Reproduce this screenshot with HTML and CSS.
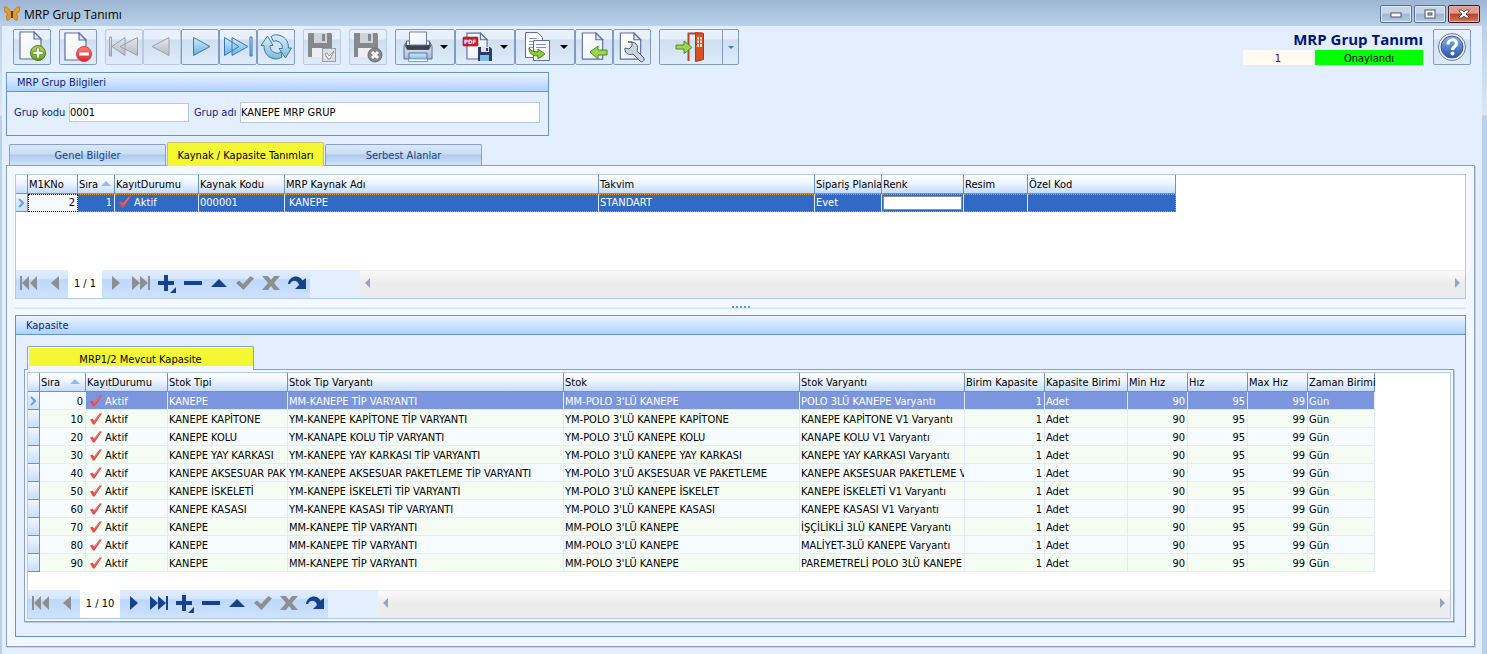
FILE: index.html
```html
<!DOCTYPE html>
<html lang="tr">
<head>
<meta charset="UTF-8">
<meta name="viewport" content="width=device-width, initial-scale=1.0">
<title>MRP Grup Tanımı</title>
<link rel="stylesheet" href="styles.css">
</head>

<body>

<!-- SHARED ICONS -->
<svg class="defs" aria-hidden="true">
    <defs>
        <linearGradient id="blue" x1="0" y1="0" x2="0" y2="1"><stop offset="0" stop-color="#d5ecfb"/><stop offset="1" stop-color="#5fb0e6"/></linearGradient>
        <linearGradient id="aqua" x1="0" y1="0" x2="0" y2="1"><stop offset="0" stop-color="#d8eefa"/><stop offset="1" stop-color="#7fb9dc"/></linearGradient>
        <linearGradient id="gray" x1="0" y1="0" x2="0" y2="1"><stop offset="0" stop-color="#e6e9ed"/><stop offset="1" stop-color="#b4b9c0"/></linearGradient>
        <linearGradient id="green" x1="0" y1="0" x2="0" y2="1"><stop offset="0" stop-color="#b4e05a"/><stop offset="1" stop-color="#5f9f1e"/></linearGradient>
        <linearGradient id="red" x1="0" y1="0" x2="0" y2="1"><stop offset="0" stop-color="#ff8078"/><stop offset="1" stop-color="#dc1f2b"/></linearGradient>
        <linearGradient id="paper" x1="0" y1="0" x2="1" y2="1"><stop offset="0" stop-color="#ffffff"/><stop offset="1" stop-color="#e9eef8"/></linearGradient>
        <linearGradient id="help" x1="0" y1="0" x2="0" y2="1"><stop offset="0" stop-color="#8db4ea"/><stop offset="1" stop-color="#2a52a8"/></linearGradient>
        <linearGradient id="body" x1="0" y1="0" x2="0" y2="1"><stop offset="0" stop-color="#f4f6fa"/><stop offset="1" stop-color="#a9b7d0"/></linearGradient>
    </defs>
    <symbol id="tick" viewBox="0 0 12 12"><path d="M0 6.500l2.500-1 1.500 2L9.500 0.500h2.500L4.500 11.500H3z" fill="#ee4a4a"/><path d="M4 8.500L10 1.500" stroke="#f58a8a" stroke-width=".8"/></symbol>
    <symbol id="first" viewBox="0 0 20 16"><path d="M1 1h2v14H1zM10 1v14L3 8zM18 1v14L11 8z" fill="currentColor"/></symbol>
    <symbol id="prev" viewBox="0 0 20 16"><path d="M14 1v14L6 8z" fill="currentColor"/></symbol>
    <symbol id="next" viewBox="0 0 20 16"><path d="M7 1v14l8-7z" fill="currentColor"/></symbol>
    <symbol id="last" viewBox="0 0 20 16"><path d="M17 1h2v14h-2zM1 1v14l8-7zM9 1v14l8-7z" fill="currentColor"/></symbol>
    <symbol id="add" viewBox="0 0 20 18"><path d="M7 0h4v6h6v4h-6v6H7v-6H1V6h6zM19 12v6h-6z" fill="currentColor"/></symbol>
    <symbol id="remove" viewBox="0 0 20 16"><path d="M1 6h18v4H1z" fill="currentColor"/></symbol>
    <symbol id="edit" viewBox="0 0 20 16"><path d="M2 12l8-8 8 8z" fill="currentColor"/></symbol>
    <symbol id="post" viewBox="0 0 20 16"><path d="M1 8l3-2.500 4 3.500 7.500-8 3.500 2.500L8.500 15z" fill="currentColor"/></symbol>
    <symbol id="cancel" viewBox="0 0 20 16"><path d="M1 1h6l3 4 3-4h6l-6 7 6 7h-6l-3-4-3 4H1l6-7z" fill="currentColor"/></symbol>
    <symbol id="redo" viewBox="0 0 20 16"><path d="M1 9C2 1 12-1 15.500 5.500L19 3v11H8l4-4C11 5 5 4 3 9z" fill="currentColor"/></symbol>
    <symbol id="page" viewBox="0 0 24 30"><path d="M1 1h14l7 7v20H1z" fill="url(#paper)" stroke="#5a70a4" stroke-width="1.200"/><path d="M15 1v7h7z" fill="#dfe7f6" stroke="#5a70a4" stroke-width="1.200"/></symbol>
    <symbol id="floppy" viewBox="0 0 26 26"><path d="M1 1h23l1 1v23H1z" fill="currentColor"/><path d="M7 1h13v10H7z" fill="#d0d3d8"/><path d="M15 2h3v7h-3z" fill="currentColor"/><path d="M5 16h16v9H5z" fill="#eceef1"/></symbol>
</svg>

<div class="window">

    <!-- TITLE BAR -->
    <header class="titlebar">
        <svg class="app-icon" viewBox="0 0 16 16"><path d="M7.500 7C5 2 2 0 0 1c0 3 1 6 4 7-2 1-2 3-1 6 2 1 3-1 4.500-4zM8.500 7C11 2 14 0 16 1c0 3-1 6-4 7 2 1 2 3 1 6-2 1-3-1-4.500-4z" fill="#ee9a22" stroke="#a8660c" stroke-width=".6"/><path d="M8 5v7" stroke="#3b2408" stroke-width="1.500"/></svg>
        <span class="title">MRP Grup Tanımı</span>
        <div class="window-buttons">
            <button type="button" aria-label="Simge durumuna küçült"><svg width="12" height="10" viewBox="0 0 12 10"><rect x="1" y="4" width="10" height="4" fill="#fff" stroke="#4a5566"/></svg></button>
            <button type="button" aria-label="Ekranı kapla"><svg width="12" height="10" viewBox="0 0 12 10"><rect x="1" y="1" width="10" height="8" fill="#fff" stroke="#4a5566"/><rect x="4" y="4" width="4" height="2" fill="#b4c6dc" stroke="#4a5566"/></svg></button>
            <button type="button" class="close" aria-label="Kapat"><svg width="12" height="10" viewBox="0 0 12 10"><path d="M1 1h3l2 2 2-2h3v1L8 5l3 3v1H8L6 7 4 9H1V8l3-3-3-3z" fill="#fff" stroke="#50303a" stroke-width=".8"/></svg></button>
        </div>
    </header>

    <div class="content">

        <!-- TOOLBAR -->
        <div class="toolbar">
            <div class="tool-group">
                <button type="button" class="tool" aria-label="Yeni"><svg viewBox="0 0 32 32"><use href="#page" x="3" y="0" width="24" height="30"/><circle cx="22" cy="22" r="7.500" fill="url(#green)" stroke="#47791a"/><path d="M20.500 17h3v3.500H27v3h-3.500V27h-3v-3.500H17v-3h3.500z" fill="#fff" stroke="#47791a" stroke-width=".6"/></svg></button>
            </div>
            <div class="tool-group">
                <button type="button" class="tool" aria-label="Sil"><svg viewBox="0 0 32 32"><use href="#page" x="2" y="1" width="24" height="30"/><circle cx="22" cy="23" r="7.500" fill="url(#red)" stroke="#e04048"/><path d="M17 21.500h10v3H17z" fill="#fff"/></svg></button>
            </div>
            <div class="tool-group">
                <button type="button" class="tool" disabled aria-label="İlk kayıt"><svg viewBox="0 0 32 32"><path d="M1.500 6h2v19h-2zM17 6.500v18L4 15.500zM29.500 6.500v18L12 15.500z" fill="url(#gray)" stroke="#9aa1ab"/></svg></button>
                <button type="button" class="tool" disabled aria-label="Önceki kayıt"><svg viewBox="0 0 32 32"><path d="M23 6.500v18L6 15.500z" fill="url(#gray)" stroke="#9aa1ab"/></svg></button>
                <button type="button" class="tool" aria-label="Sonraki kayıt"><svg viewBox="0 0 32 32"><path d="M9.500 6.500v18L26 15.500z" fill="url(#blue)" stroke="#3a78b4"/></svg></button>
                <button type="button" class="tool" aria-label="Son kayıt"><svg viewBox="0 0 32 32"><path d="M2.500 6.500v18L17 15.500zM10 6.500v18L26 15.500zM28 6h2v19h-2z" fill="url(#blue)" stroke="#3a78b4"/></svg></button>
                <button type="button" class="tool" aria-label="Yenile"><svg viewBox="0 0 32 32"><path d="M1 14.500L7.500 5l5.500 9.500h-3c0 4 2 6.500 6 7.500 2 .5 3.500 0 5-1l1 5c-3 2-6 2.500-9 1.500C7 26 4 21 4 14.500z" fill="url(#aqua)" stroke="#42789c" stroke-linejoin="round"/><path d="M31.500 17L25.500 27 19 17.500h3.500c0-4-2-6.500-5.500-7.500-1.500-.5-2.500 0-3.500.5L11 5.500c3-2 6-2 9-1 6 2 8.500 6.500 8.500 12.500z" fill="url(#aqua)" stroke="#42789c" stroke-linejoin="round"/></svg></button>
            </div>
            <div class="tool-group">
                <button type="button" class="tool" disabled aria-label="Kaydet"><svg class="faded" viewBox="0 0 32 32"><use href="#floppy" x="1" y="1" width="26" height="26"/><rect x="16.500" y="17.500" width="13" height="13" fill="#dcdfe4" stroke="#989da5"/><path d="M19 23l2-1 2 3 5-5-4 8h-2z" fill="#fff" stroke="#8f949c"/></svg></button>
            </div>
            <div class="tool-group">
                <button type="button" class="tool" disabled aria-label="Kaydet ve kapat"><svg class="faded" viewBox="0 0 32 32"><use href="#floppy" x="1" y="1" width="26" height="26"/><circle cx="23" cy="24" r="7" fill="#85888d" stroke="#6a6d72"/><path d="M20 21l6 6m0-6l-6 6" stroke="#fff" stroke-width="3"/></svg></button>
            </div>
            <div class="tool-group">
                <button type="button" class="tool menu" aria-label="Yazdır"><svg viewBox="0 0 32 32"><path d="M5 10h22l3 5v13H2V15z" fill="url(#body)" stroke="#5a6c94"/><path d="M5 9v7h22V9l2 6-2 4H5l-2-4z" fill="#4a535f"/><path d="M5 14h22v4H5z" fill="#3a424e"/><path d="M7.500 1h17v13h-17z" fill="url(#paper)" stroke="#6a7cac"/><path d="M7 22h18v8H7z" fill="url(#blue)" stroke="#5a70a4"/><path d="M6.500 28h19v2.500h-19z" fill="#fff" stroke="#5a70a4" stroke-width=".6"/></svg><span class="caret"></span></button>
                <button type="button" class="tool menu" aria-label="PDF olarak kaydet"><svg viewBox="0 0 32 32"><use href="#page" x="4" y="1" width="23" height="29"/><rect x="1" y="6" width="15" height="9" rx="1" fill="#c8202c" stroke="#9c1520" stroke-width=".6"/><text class="pdf" x="2" y="13">PDF</text><path d="M16 16h12l2 2v12H16z" fill="#2c3d68"/><path d="M19 16h8v5h-8z" fill="#dfe5f0"/><path d="M24 17h2v3h-2z" fill="#2c3d68"/><path d="M18 24h9v6h-9z" fill="#7cbcec"/></svg><span class="caret"></span></button>
                <button type="button" class="tool menu" aria-label="Kopyala"><svg viewBox="0 0 32 32"><path d="M3.500 1.500h12l5 5v20h-17z" fill="#fff" stroke="#5a70a4"/><path d="M7 7.500h8M7 10.500h8M7 13.500h6M7 16.500h4" stroke="#7b92c8"/><path d="M11.500 9.500h16v20h-16z" fill="url(#paper)" stroke="#5a70a4"/><path d="M14 13.500h10M14 16.500h10" stroke="#7b92c8"/><path d="M7 17c2 3 5 4 9 4v-3l7 5-7 5v-3c-6 0-9-3-9-8z" fill="#8ccc3e" stroke="#4d8420" stroke-linejoin="round"/></svg><span class="caret"></span></button>
                <button type="button" class="tool" aria-label="Aktar"><svg viewBox="0 0 32 32"><use href="#page" x="3" y="1" width="24" height="29"/><path d="M12 21l8-6v4h9v5h-9v4z" fill="#9ad64e" stroke="#4f8a20" stroke-linejoin="round"/></svg></button>
                <button type="button" class="tool" aria-label="Ayarlar"><svg viewBox="0 0 32 32"><use href="#page" x="3" y="1" width="24" height="29"/><path d="M12 11h4v4l-3 3-4-1c-1 4 3 8 8 6l7 7c2 2 5 0 4-3l-7-7c2-5-1-10-9-9z" fill="#cbd3de" stroke="#4f5c70" stroke-linejoin="round"/></svg></button>
            </div>
            <div class="tool-group">
                <button type="button" class="tool exit" aria-label="Çıkış"><svg viewBox="0 0 32 32"><path d="M13.500 30V2.500H28" fill="none" stroke="#b8482a" stroke-width="2"/><path d="M20.500 1.500l8 1v26l-8 2z" fill="#d95024" stroke="#a63a1c"/><path d="M22 6h5v10h-5z" fill="#f5dcc4"/><path d="M22 9h5M22 12.500h5M24.500 6v10" stroke="#b8683c"/><path d="M1 14h8v-4l8 6.500-8 6V18H1z" fill="#9ad64e" stroke="#4f8a20" stroke-linejoin="round"/></svg></button>
                <button type="button" class="tool drop" aria-label="Çıkış seçenekleri"><span class="caret small"></span></button>
            </div>

            <div class="summary">
                <h1>MRP Grup Tanımı</h1>
                <div class="status">
                    <span class="status-no">1</span>
                    <span class="status-text">Onaylandı</span>
                </div>
            </div>
            <button type="button" class="tool" aria-label="Yardım"><svg viewBox="0 0 32 32"><circle cx="16" cy="16" r="13.500" fill="#f0f3fa" stroke="#6a7890"/><circle cx="16" cy="16" r="11" fill="url(#help)" stroke="#34549a"/><path d="M12 13.500c0-6 8.500-6 8.500-1 0 3-4 3-4 6.500" fill="none" stroke="#fff" stroke-width="3"/><circle cx="16.500" cy="22.500" r="2" fill="#fff"/></svg></button>
        </div>

        <!-- GROUP INFO -->
        <section class="box info">
            <h2>MRP Grup Bilgileri</h2>
            <div class="fields">
                <label for="kod">Grup kodu</label>
                <input type="text" id="kod" class="kod" value="0001">
                <label for="ad">Grup adı</label>
                <input type="text" id="ad" class="ad" value="KANEPE MRP GRUP">
            </div>
        </section>

        <!-- MAIN TABS -->
        <div class="tabs" role="tablist">
            <button type="button" class="tab" role="tab">Genel Bilgiler</button>
            <button type="button" class="tab active" role="tab" aria-selected="true">Kaynak / Kapasite Tanımları</button>
            <button type="button" class="tab" role="tab">Serbest Alanlar</button>
        </div>

        <main class="panel">

            <!-- RESOURCES -->
            <div class="grid resources">
                <table>
                    <colgroup><col class="w12"><col class="w50"><col class="w37"><col class="w84"><col class="w86"><col class="w314"><col class="w216"><col class="w67"><col class="w82"><col class="w64"><col class="w148"></colgroup>
                    <thead>
                        <tr><th></th><th>M1KNo</th><th class="sorted">Sıra</th><th>KayıtDurumu</th><th>Kaynak Kodu</th><th>MRP Kaynak Adı</th><th>Takvim</th><th>Sipariş Planla</th><th>Renk</th><th>Resim</th><th>Özel Kod</th></tr>
                    </thead>
                    <tbody>
                        <tr class="focused"><td class="mark"><svg class="arrow" viewBox="0 0 6 10"><path d="M1 1l4 4-4 4"/></svg></td><td class="num cell-focus">2</td><td class="num">1</td><td class="state"><svg><use href="#tick"/></svg>Aktif</td><td>000001</td><td class="name">KANEPE</td><td>STANDART</td><td>Evet</td><td><span class="swatch"></span></td><td></td><td></td></tr>
                    </tbody>
                </table>
                <div class="navigator">
                    <div class="nav-buttons">
                        <button type="button" disabled aria-label="İlk"><svg><use href="#first"/></svg></button>
                        <button type="button" disabled aria-label="Önceki"><svg><use href="#prev"/></svg></button>
                        <span class="counter">1 / 1</span>
                        <button type="button" disabled aria-label="Sonraki"><svg><use href="#next"/></svg></button>
                        <button type="button" disabled aria-label="Son"><svg><use href="#last"/></svg></button>
                        <button type="button" aria-label="Ekle"><svg class="tall"><use href="#add"/></svg></button>
                        <button type="button" aria-label="Çıkar"><svg><use href="#remove"/></svg></button>
                        <button type="button" aria-label="Düzenle"><svg><use href="#edit"/></svg></button>
                        <button type="button" disabled aria-label="Onayla"><svg><use href="#post"/></svg></button>
                        <button type="button" disabled aria-label="Vazgeç"><svg><use href="#cancel"/></svg></button>
                        <button type="button" aria-label="Tazele"><svg><use href="#redo"/></svg></button>
                    </div>
                    <div class="scrollbar">
                        <button type="button" class="to-left" aria-label="Sola kaydır"></button>
                        <button type="button" class="to-right" aria-label="Sağa kaydır"></button>
                    </div>
                </div>
            </div>

            <div class="splitter"><span></span></div>

            <!-- CAPACITY -->
            <section class="box capacity">
                <h2>Kapasite</h2>
                <div class="capacity-body">
                    <div class="tabs inner" role="tablist">
                        <button type="button" class="tab active" role="tab" aria-selected="true">MRP1/2 Mevcut Kapasite</button>
                    </div>
                    <div class="inner-panel">
                        <div class="grid">
                            <table>
                                <colgroup><col class="w12"><col class="w46"><col class="w82"><col class="w120"><col class="w276"><col class="w236"><col class="w165"><col class="w80"><col class="w83"><col class="w60"><col class="w60"><col class="w60"><col class="w67"></colgroup>
                                <thead>
                                    <tr><th></th><th class="sorted">Sıra</th><th>KayıtDurumu</th><th>Stok Tipi</th><th>Stok Tip Varyantı</th><th>Stok</th><th>Stok Varyantı</th><th>Birim Kapasite</th><th>Kapasite Birimi</th><th>Min Hız</th><th>Hız</th><th>Max Hız</th><th>Zaman Birimi</th></tr>
                                </thead>
                                <tbody>
                                    <tr class="selected"><td class="mark"><svg class="arrow" viewBox="0 0 6 10"><path d="M1 1l4 4-4 4"/></svg></td><td class="num">0</td><td class="state"><svg><use href="#tick"/></svg>Aktif</td><td>KANEPE</td><td>MM-KANEPE TİP VARYANTI</td><td>MM-POLO 3'LÜ KANEPE</td><td>POLO 3LÜ KANEPE Varyantı</td><td class="num">1</td><td>Adet</td><td class="num">90</td><td class="num">95</td><td class="num">99</td><td>Gün</td></tr>
                                    <tr><td class="mark"></td><td class="num">10</td><td class="state"><svg><use href="#tick"/></svg>Aktif</td><td>KANEPE KAPİTONE</td><td>YM-KANEPE KAPİTONE TİP VARYANTI</td><td>YM-POLO 3'LÜ KANEPE KAPİTONE</td><td>KANEPE KAPİTONE V1 Varyantı</td><td class="num">1</td><td>Adet</td><td class="num">90</td><td class="num">95</td><td class="num">99</td><td>Gün</td></tr>
                                    <tr><td class="mark"></td><td class="num">20</td><td class="state"><svg><use href="#tick"/></svg>Aktif</td><td>KANEPE KOLU</td><td>YM-KANAPE KOLU TİP VARYANTI</td><td>YM-POLO 3'LÜ KANEPE KOLU</td><td>KANAPE KOLU V1 Varyantı</td><td class="num">1</td><td>Adet</td><td class="num">90</td><td class="num">95</td><td class="num">99</td><td>Gün</td></tr>
                                    <tr><td class="mark"></td><td class="num">30</td><td class="state"><svg><use href="#tick"/></svg>Aktif</td><td>KANEPE YAY KARKASI</td><td>YM-KANEPE YAY KARKASI TİP VARYANTI</td><td>YM-POLO 3'LÜ KANEPE YAY KARKASI</td><td>KANEPE YAY KARKASI Varyantı</td><td class="num">1</td><td>Adet</td><td class="num">90</td><td class="num">95</td><td class="num">99</td><td>Gün</td></tr>
                                    <tr><td class="mark"></td><td class="num">40</td><td class="state"><svg><use href="#tick"/></svg>Aktif</td><td>KANEPE AKSESUAR PAK</td><td>YM-KANEPE AKSESUAR PAKETLEME TİP VARYANTI</td><td>YM-POLO 3'LÜ AKSESUAR VE PAKETLEME</td><td>KANEPE AKSESUAR PAKETLEME V</td><td class="num">1</td><td>Adet</td><td class="num">90</td><td class="num">95</td><td class="num">99</td><td>Gün</td></tr>
                                    <tr><td class="mark"></td><td class="num">50</td><td class="state"><svg><use href="#tick"/></svg>Aktif</td><td>KANEPE İSKELETİ</td><td>YM-KANEPE İSKELETİ TİP VARYANTI</td><td>YM-POLO 3'LÜ KANEPE İSKELET</td><td>KANEPE İSKELETİ V1 Varyantı</td><td class="num">1</td><td>Adet</td><td class="num">90</td><td class="num">95</td><td class="num">99</td><td>Gün</td></tr>
                                    <tr><td class="mark"></td><td class="num">60</td><td class="state"><svg><use href="#tick"/></svg>Aktif</td><td>KANEPE KASASI</td><td>YM-KANEPE KASASI TİP VARYANTI</td><td>YM-POLO 3'LÜ KANEPE KASASI</td><td>KANEPE KASASI V1 Varyantı</td><td class="num">1</td><td>Adet</td><td class="num">90</td><td class="num">95</td><td class="num">99</td><td>Gün</td></tr>
                                    <tr><td class="mark"></td><td class="num">70</td><td class="state"><svg><use href="#tick"/></svg>Aktif</td><td>KANEPE</td><td>MM-KANEPE TİP VARYANTI</td><td>MM-POLO 3'LÜ KANEPE</td><td>İŞÇİLİKLİ 3LÜ KANEPE Varyantı</td><td class="num">1</td><td>Adet</td><td class="num">90</td><td class="num">95</td><td class="num">99</td><td>Gün</td></tr>
                                    <tr><td class="mark"></td><td class="num">80</td><td class="state"><svg><use href="#tick"/></svg>Aktif</td><td>KANEPE</td><td>MM-KANEPE TİP VARYANTI</td><td>MM-POLO 3'LÜ KANEPE</td><td>MALİYET-3LÜ KANEPE Varyantı</td><td class="num">1</td><td>Adet</td><td class="num">90</td><td class="num">95</td><td class="num">99</td><td>Gün</td></tr>
                                    <tr><td class="mark"></td><td class="num">90</td><td class="state"><svg><use href="#tick"/></svg>Aktif</td><td>KANEPE</td><td>MM-KANEPE TİP VARYANTI</td><td>MM-POLO 3'LÜ KANEPE</td><td>PAREMETRELİ POLO 3LÜ KANEPE</td><td class="num">1</td><td>Adet</td><td class="num">90</td><td class="num">95</td><td class="num">99</td><td>Gün</td></tr>
                                </tbody>
                            </table>
                            <div class="navigator">
                                <div class="nav-buttons">
                                    <button type="button" disabled aria-label="İlk"><svg><use href="#first"/></svg></button>
                                    <button type="button" disabled aria-label="Önceki"><svg><use href="#prev"/></svg></button>
                                    <span class="counter wide">1 / 10</span>
                                    <button type="button" aria-label="Sonraki"><svg><use href="#next"/></svg></button>
                                    <button type="button" aria-label="Son"><svg><use href="#last"/></svg></button>
                                    <button type="button" aria-label="Ekle"><svg class="tall"><use href="#add"/></svg></button>
                                    <button type="button" aria-label="Çıkar"><svg><use href="#remove"/></svg></button>
                                    <button type="button" aria-label="Düzenle"><svg><use href="#edit"/></svg></button>
                                    <button type="button" disabled aria-label="Onayla"><svg><use href="#post"/></svg></button>
                                    <button type="button" disabled aria-label="Vazgeç"><svg><use href="#cancel"/></svg></button>
                                    <button type="button" aria-label="Tazele"><svg><use href="#redo"/></svg></button>
                                </div>
                                <div class="scrollbar">
                                    <button type="button" class="to-left" aria-label="Sola kaydır"></button>
                                    <button type="button" class="to-right" aria-label="Sağa kaydır"></button>
                                </div>
                            </div>
                        </div>
                    </div>
                </div>
            </section>
        </main>
    </div>
</div>

</body>
</html>
```
FILE: styles.css
```css
* {
    margin: 0;
    padding: 0;
    box-sizing: border-box;
}

body {
    background: #b9d1ea;
    color: #000;
    font-family: 'DejaVu Sans Condensed', 'DejaVu Sans', sans-serif;
    font-size: 11px;
    line-height: 14px;
}

button, input {
    font: inherit;
    color: inherit;
}

svg {
    display: block;
    flex: none;
}

.defs {
    position: absolute;
    width: 0;
    height: 0;
}

/* =======================
     WINDOW
======================== */
.window {
    display: flex;
    flex-direction: column;
    min-height: 100vh;
    padding: 0 5px 0 2px;
    background: linear-gradient(#9bb5d3, #b9d1ea 26px, #dbe7f5 115px, #b9d1ea 116px);
}

.titlebar {
    display: flex;
    align-items: center;
    height: 26px;
    padding: 2px 0 0 2px;
}

.app-icon {
    width: 16px;
    height: 16px;
}

.title {
    flex: 1;
    padding-top: 2px;
    margin-left: 4px;
    font-family: 'Open Sans', 'Noto Sans', sans-serif;
    font-size: 12px;
}

.window-buttons {
    display: flex;
    gap: 2px;
    padding-right: 2px;
}

.window-buttons button {
    display: flex;
    align-items: center;
    justify-content: center;
    width: 32px;
    height: 18px;
    border: 1px solid #5a6f8c;
    border-radius: 2px;
    background: linear-gradient(#c5d6e9 45%, #9db6d2 50%, #b5cbe3);
    box-shadow: inset 0 0 0 1px #dde9f5;
}

.window-buttons .close {
    border-color: #43141c;
    background: linear-gradient(#dd9d8f 45%, #b8402a 50%, #cf7a5c);
    box-shadow: inset 0 0 0 1px #e6b5a8;
}

.content {
    flex: 1;
    display: flex;
    flex-direction: column;
    background: #e3efff;
}

/* =======================
     TOOLBAR
======================== */
.toolbar {
    display: flex;
    gap: 8px;
    padding: 3px 11px 7px;
}

.tool-group {
    display: flex;
}

.tool {
    display: flex;
    align-items: center;
    justify-content: center;
    width: 38px;
    height: 36px;
    border: 1px solid #7f9dc4;
    border-radius: 2px;
    background: linear-gradient(#e8f1fb 25%, #cfdff1 30%, #deebfa);
}

.tool svg {
    width: 32px;
    height: 32px;
}

.tool:disabled {
    border-color: #b9cbe2;
}

.faded {
    color: #85888d;
}

.menu {
    justify-content: flex-start;
    gap: 6px;
    width: 60px;
    padding-left: 6px;
}

.exit {
    width: 64px;
    border-radius: 2px 0 0 2px;
}

.drop {
    width: 17px;
    margin-left: -1px;
    border-radius: 0 2px 2px 0;
}

.caret {
    border: 4px solid transparent;
    border-top-color: #000;
    border-bottom: 0;
}

.caret.small {
    border-width: 3px 3px 0;
    border-top-color: #4a78b8;
}

.pdf {
    font: bold 6px 'DejaVu Sans Condensed', sans-serif;
    fill: #fff;
}

.summary {
    display: flex;
    flex-direction: column;
    align-items: flex-end;
    margin-left: auto;
    margin-right: 2px;
}

.summary h1 {
    color: #00147a;
    font-family: 'Open Sans', 'Noto Sans', sans-serif;
    font-size: 15px;
    line-height: 21px;
}

.status {
    display: flex;
    gap: 2px;
    text-align: center;
}

.status span {
    height: 15px;
    line-height: 17px;
}

.status-no {
    width: 70px;
    background: #fffaf0;
    color: #600060;
}

.status-text {
    width: 108px;
    background: #00ff00;
}

/* =======================
     BOXES & FIELDS
======================== */
.box {
    border: 1px solid #6593cf;
}

.box h2 {
    height: 19px;
    padding: 0 10px;
    border-bottom: 1px solid #6593cf;
    background: linear-gradient(#f0f7ff, #e6f1ff 1px, #afd2ff);
    color: #0a1f80;
    font-size: 11px;
    font-weight: normal;
    line-height: 19px;
}

.info {
    width: 543px;
    margin-left: 4px;
}

.fields {
    display: flex;
    align-items: center;
    height: 43px;
    padding: 0 8px 2px 7px;
    color: #0a1f80;
}

.fields input {
    height: 19px;
    border: 1px solid #b3c8e2;
    background: #fff;
    color: #000;
}

.fields .kod {
    width: 120px;
    margin: 0 5px 0 auto;
}

.fields .ad {
    width: 300px;
    height: 21px;
    margin-left: auto;
}

/* =======================
     TABS
======================== */
.tabs {
    display: flex;
    align-items: flex-end;
    gap: 1px;
    padding: 6px 3px 0 7px;
}

.tab {
    width: 157px;
    height: 21px;
    padding-top: 2px;
    border: 1px solid #8ba0c7;
    border-bottom: 0;
    border-radius: 2px 2px 0 0;
    background: linear-gradient(#dceaf9, #c8dcf3 45%, #aecbee 50%, #cfe3fb);
    color: #15428b;
}

.tab.active {
    z-index: 1;
    height: 24px;
    margin-bottom: -1px;
    border-color: #c5c06a;
    background: #f4f833;
    color: #000;
}

.panel {
    flex: 1;
    display: flex;
    flex-direction: column;
    margin: 0 7px 7px 4px;
    padding: 8px 8px 9px;
    border: 1px solid #8ba0c7;
    background: #f3f8ff;
    box-shadow: 1px 1px 0 #c5d5ed;
}

/* =======================
     DATA GRIDS
======================== */
.grid {
    display: flex;
    flex-direction: column;
    justify-content: space-between;
    border: 1px solid #b3c8e2;
    background: #fff;
    overflow: hidden;
}

.resources {
    min-height: 125px;
}

table {
    width: 0;
    table-layout: fixed;
    border-collapse: separate;
    border-spacing: 0;
}

th, td {
    overflow: hidden;
    padding: 1px 0 0 1px;
    font-weight: normal;
    line-height: 16px;
    text-align: left;
    white-space: nowrap;
}

th {
    height: 19px;
    border-right: 1px solid #6593cf;
    border-bottom: 1px solid #6593cf;
    background: linear-gradient(#fff, #f0f6ff 40%, #c5dcfb);
}

th:last-child {
    overflow: visible;
}

td {
    height: 18px;
    padding-top: 2px;
    border-right: 1px solid #e0ecfd;
    border-bottom: 1px solid #e0ecfd;
    background: #f6fbff;
    line-height: 15px;
}

tbody tr:nth-child(even) td {
    background: #f5fcf3;
}

.num {
    padding-right: 2px;
    text-align: right;
}

.name {
    padding-left: 4px;
}

.sorted::after {
    content: '';
    display: inline-block;
    margin: 0 0 2px 10px;
    border: 5px solid transparent;
    border-bottom-color: #8fbcf5;
    border-top: 0;
}

.resources .sorted::after {
    margin-left: 3px;
}

.state svg {
    float: left;
    width: 12px;
    height: 12px;
    margin: 1px 3px 0;
}

td.mark,
tbody tr:nth-child(even) td.mark {
    padding: 0 3px 0 2px;
    border-color: #6593cf;
    background: linear-gradient(#f0f6ff, #c8defb);
}

.arrow {
    width: 6px;
    height: 10px;
    fill: none;
    stroke: #6a9ee6;
    stroke-width: 2;
}

.selected td:nth-child(n+3) {
    background: #7b96df;
    color: #fff;
}

.focused td {
    padding-top: 0;
    line-height: 16px;
}

.focused td:nth-child(n+3) {
    border-top: 1px dotted #e0962c;
    border-bottom: 1px dotted #e0962c;
    background: #316ac5;
    color: #fff;
}

.focused td:last-child {
    border-right: 1px dotted #e0962c;
}

.focused .cell-focus {
    border: 1px dotted #000;
}

.focused .swatch {
    display: block;
    height: 14px;
    margin-right: 1px;
    border: 1px solid #8f8f8f;
    background: #fff;
}

.w12 { width: 12px; }
.w37 { width: 37px; }
.w46 { width: 46px; }
.w50 { width: 50px; }
.w60 { width: 60px; }
.w64 { width: 64px; }
.w67 { width: 67px; }
.w80 { width: 80px; }
.w82 { width: 82px; }
.w83 { width: 83px; }
.w84 { width: 84px; }
.w86 { width: 86px; }
.w120 { width: 120px; }
.w148 { width: 148px; }
.w165 { width: 165px; }
.w216 { width: 216px; }
.w236 { width: 236px; }
.w276 { width: 276px; }
.w314 { width: 314px; }

/* =======================
     NAVIGATOR
======================== */
.navigator {
    display: flex;
    gap: 50px;
    height: 28px;
    background: #e3efff;
}

.nav-buttons {
    display: flex;
    background: linear-gradient(#e0edff, #d5e6ff 30%, #bdd8fd 35%, #cfe2ff);
}

.nav-buttons button {
    display: flex;
    align-items: flex-start;
    justify-content: center;
    width: 26px;
    padding-top: 5px;
    border: 0;
    background: none;
    color: #15428b;
}

.nav-buttons button:disabled {
    color: #8f8f8f;
}

.nav-buttons svg {
    width: 20px;
    height: 16px;
}

.nav-buttons .tall {
    height: 18px;
}

.counter {
    width: 34px;
    background: #fff;
    line-height: 28px;
    text-align: center;
}

.counter.wide {
    width: 40px;
}

.scrollbar {
    flex: 1;
    display: flex;
    align-items: center;
    justify-content: space-between;
    padding: 0 5px 3px;
    border-top: 1px solid #ececec;
    background: linear-gradient(#fafafa, #ececec 45%);
}

.scrollbar button {
    border: 5px solid transparent;
    background: none;
}

.scrollbar .to-left {
    border-right-color: #93a4c8;
    border-left: 0;
}

.scrollbar .to-right {
    border-left-color: #93a4c8;
    border-right: 0;
}

/* =======================
     CAPACITY
======================== */
.splitter {
    display: flex;
    align-items: center;
    justify-content: center;
    height: 16px;
    background: linear-gradient(#fff, #c5dfff) 0 7px / 100% 3px no-repeat;
}

.splitter span {
    width: 18px;
    border-top: 2px dotted #6593cf;
}

.capacity {
    flex: 1;
    display: flex;
    flex-direction: column;
    background: #e3efff;
}

.capacity-body {
    flex: 1;
    display: flex;
    flex-direction: column;
    padding: 11px 11px 14px 8px;
}

.inner {
    padding: 0 3px;
}

.inner .tab.active {
    width: 227px;
    border-color: #8ba0c7;
    background: linear-gradient(#f4f833, #f4f833) 1px 1px / 100% 18px no-repeat #f3f8ff;
}

.inner-panel {
    flex: 1;
    display: flex;
    padding: 2px;
    border: 1px solid #8ba0c7;
    background: #f3f8ff;
    box-shadow: 1px 1px 0 #b8cbe6;
}

.inner-panel .grid {
    flex: 1;
}
```
